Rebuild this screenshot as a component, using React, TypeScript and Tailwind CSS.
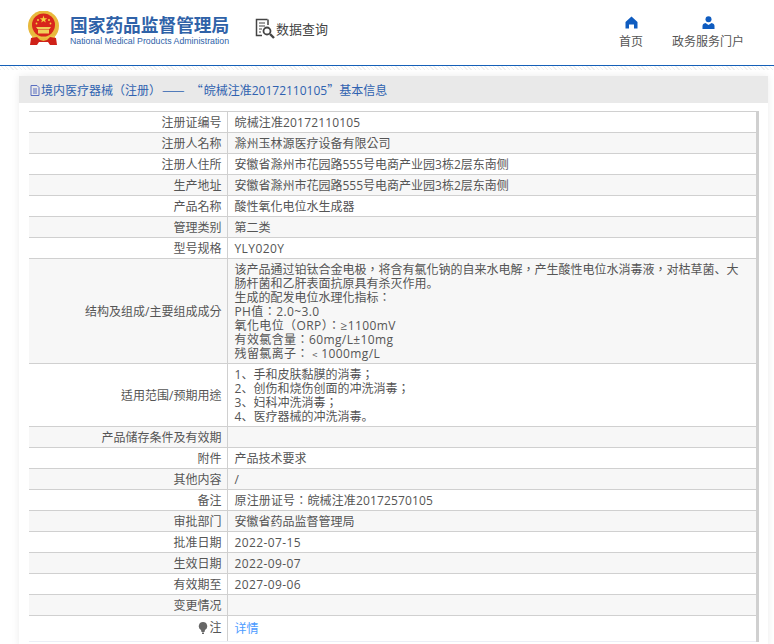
import React from "react";

// 、。 sit low-left in the reference, the rest of the punctuation is centred
function Txt({ children }: { children: string }) {
  return (
    <>
      {children.split(/([、。])/).map((part, i) =>
        part === "、" || part === "。" ? (
          <span key={i} className="font-['Noto_Sans_CJK_SC',sans-serif] leading-[0]">
            {part}
          </span>
        ) : (
          part
        ),
      )}
    </>
  );
}

const Wide = ({ children }: { children: React.ReactNode }) => <span className="tracking-[0.4px]">{children}</span>;

const rows: { label: React.ReactNode; value?: React.ReactNode; alt?: boolean }[] = [
  { label: "注册证编号", value: <span className="tracking-[0.15px]">皖械注准20172110105</span> },
  { label: "注册人名称", value: "滁州玉林源医疗设备有限公司", alt: true },
  { label: "注册人住所", value: "安徽省滁州市花园路555号电商产业园3栋2层东南侧" },
  { label: "生产地址", value: "安徽省滁州市花园路555号电商产业园3栋2层东南侧", alt: true },
  { label: "产品名称", value: "酸性氧化电位水生成器" },
  { label: "管理类别", value: "第二类", alt: true },
  { label: "型号规格", value: <Wide>YLY020Y</Wide> },
  {
    label: "结构及组成/主要组成成分",
    alt: true,
    value: (
      <>
        <Txt>该产品通过铂钛合金电极，将含有氯化钠的自来水电解，产生酸性电位水消毒液，对枯草菌、大肠杆菌和乙肝表面抗原具有杀灭作用。</Txt>
        <br />
        生成的配发电位水理化指标：
        <br />
        <Wide>PH值：2.0~3.0</Wide>
        <br />
        <Wide>氧化电位（ORP）：≥1100mV</Wide>
        <br />
        <Wide>有效氯含量：60mg/L±10mg</Wide>
        <br />
        <Wide>残留氯离子：﹤1000mg/L</Wide>
      </>
    ),
  },
  {
    label: "适用范围/预期用途",
    value: (
      <>
        <Txt>1、手和皮肤黏膜的消毒；</Txt>
        <br />
        <Txt>2、创伤和烧伤创面的冲洗消毒；</Txt>
        <br />
        <Txt>3、妇科冲洗消毒；</Txt>
        <br />
        <Txt>4、医疗器械的冲洗消毒。</Txt>
      </>
    ),
  },
  { label: "产品储存条件及有效期", alt: true },
  { label: "附件", value: "产品技术要求" },
  { label: "其他内容", value: "/", alt: true },
  { label: "备注", value: <span className="tracking-[0.15px]">原注册证号：皖械注准20172570105</span> },
  { label: "审批部门", value: "安徽省药品监督管理局", alt: true },
  { label: "批准日期", value: <Wide>2022-07-15</Wide> },
  { label: "生效日期", value: <Wide>2022-09-07</Wide>, alt: true },
  { label: "有效期至", value: <Wide>2027-09-06</Wide> },
  { label: "变更情况", alt: true },
];

function Emblem() {
  return (
    <svg width="33" height="36" viewBox="0 0 33 36" className="shrink-0">
      <circle cx="16.5" cy="15" r="15.5" fill="#e8b93c" />
      <circle cx="16.5" cy="14" r="11.5" fill="#d8261c" />
      <polygon points="16.5,4.5 17.4,7.2 20.2,7.2 18,8.9 18.8,11.6 16.5,10 14.2,11.6 15,8.9 12.8,7.2 15.6,7.2" fill="#f4d03f" />
      <circle cx="11" cy="9" r="1" fill="#f4d03f" />
      <circle cx="22" cy="9" r="1" fill="#f4d03f" />
      <circle cx="9.5" cy="12.5" r="0.9" fill="#f4d03f" />
      <circle cx="23.5" cy="12.5" r="0.9" fill="#f4d03f" />
      <path d="M9 16h15l-1.5 2h-12z M11 18.5h11v4H11z" fill="#f0cf5a" />
      <path d="M5 24q11.500 5 23 0v3H5z" fill="#efc34a" />
      <path d="M4 27l6-1 3 3 3.500 1 3.500-1 3-3 6 1 1 7h-7l-2-3h-9l-2 3H3z" fill="#cf2118" />
    </svg>
  );
}

function SearchDoc() {
  return (
    <svg width="21" height="21" viewBox="0 0 21 21" fill="none" stroke="#444" className="shrink-0">
      <path d="M12.500 1.500H1.500v16H7" strokeWidth="1.500" />
      <path d="M13 1.500V7" strokeWidth="1.500" />
      <path d="M4 5h6M4 8h6M4 11h3M4 14h2" strokeWidth="1.200" />
      <circle cx="12" cy="13" r="3.500" strokeWidth="1.800" />
      <path d="M15 16l4 4" strokeWidth="2.400" />
    </svg>
  );
}

function NavHome() {
  return (
    <svg width="13" height="13" viewBox="0 0 13 13" fill="#0f5cc0">
      <path d="M6.500.5L12.500 6v6.500H9V8.500H4v4H.5V6z" />
    </svg>
  );
}

function NavUser() {
  return (
    <svg width="13" height="13" viewBox="0 0 13 13" fill="#0f5cc0">
      <circle cx="6.500" cy="3.200" r="3" />
      <path d="M0.500 13V10q0-2.500 3-3l3 2 3-2q3 .5 3 3v3z" />
    </svg>
  );
}

export default function App() {
  return (
    <div className="h-[644px] w-[774px] overflow-hidden bg-white font-['Open_Sans','Noto_Sans_CJK_TC',sans-serif] text-[12px] leading-[14px] text-[#555]">
      <header className="flex h-[66px] items-start border-b border-[#1560b8] pl-[27px]">
        <div className="mt-[11px]">
          <Emblem />
        </div>
        <div className="ml-[10px] mt-[14px] w-[170px]">
          <div className="font-['Noto_Sans_CJK_SC',sans-serif] text-[17.700px] font-bold leading-[20px] text-[#2f62a8]">国家药品监督管理局</div>
          <div className="mt-[2px] whitespace-nowrap font-['Liberation_Sans',sans-serif] text-[8.750px] leading-[11px] text-[#2f62a8]">
            National Medical Products Administration
          </div>
        </div>
        <div className="ml-[15px] mt-[18px] flex items-center gap-0">
          <SearchDoc />
          <span className="text-[13px] leading-[20px] text-[#444]">数据查询</span>
        </div>
        <nav className="ml-auto mr-[30px] mt-[16px] flex gap-[29px] text-center">
          <div className="flex w-[24px] flex-col items-center gap-[6px]">
            <NavHome />
            <span className="whitespace-nowrap">首页</span>
          </div>
          <div className="flex w-[72px] flex-col items-center gap-[6px]">
            <NavUser />
            <span className="whitespace-nowrap">政务服务门户</span>
          </div>
        </nav>
      </header>
      <div className="h-[4px] bg-[repeating-linear-gradient(45deg,#f0f0f0_0,#f0f0f0_1px,#fff_1px,#fff_3px)]" />

      <main className="ml-[19px] mt-[6px] w-[749px] bg-white shadow-[0_0_8px_rgba(0,0,0,0.08)]">
        <div className="flex h-[27px] items-center whitespace-pre bg-[#e9e9e9] pl-[11px] pt-[2px] text-[#2f62b0]">
          <svg width="10" height="11" viewBox="0 0 10 11" fill="none" stroke="#5a6fc0" className="mr-[1px] shrink-0">
            <path d="M1 .5h6l2 2v8H1zM3 4h4M3 6h4M3 8h4" />
          </svg>
          <span>
            境内医疗器械（注册）
            <span className="ml-[-2px] font-['Noto_Sans_CJK_SC',sans-serif] text-[13.500px] leading-[0]"> ——</span>
            <span className="ml-[6px] mr-[1px] font-['Noto_Sans_CJK_TC',sans-serif] leading-[0]">“</span>
            皖械注准20172110105
            <span className="font-['Noto_Sans_CJK_TC',sans-serif] leading-[0]">”</span>
            基本信息
          </span>
        </div>
        <div className="px-[10px] pb-[6px] pt-[8px]">
          <table className="w-[730px] table-fixed border-collapse border-r-[3px] border-r-[#d0d0d0]">
            <colgroup>
              <col className="w-[198px]" />
              <col />
            </colgroup>
            <tbody>
              {rows.map((row, i) => (
                <tr key={i} className={row.alt ? "bg-[#f7f7f7]" : "bg-white"}>
                  <td className="border border-l-0 border-[#d0d0d0] pb-[2px] pl-[6px] pr-[5px] pt-[4px] text-right align-middle">{row.label}</td>
                  <td className="border border-r-0 border-[#d0d0d0] pb-[2px] pl-[7px] pr-[11px] pt-[4px] align-top">{row.value}</td>
                </tr>
              ))}
              <tr>
                <td className="border-b border-r border-b-[#eceef6] border-r-[#d0d0d0] pb-[4px] pl-[6px] pr-[5px] pt-[5px] text-right">
                  <span className="inline-flex items-center gap-[1px]">
                    <svg width="10" height="12" viewBox="0 0 10 12" fill="#666">
                      <path d="M5 0a4.200 4.200 0 0 1 2 7.900L6.500 10h-3L3 7.900A4.200 4.200 0 0 1 5 0zM4 10.500h2V12H4z" />
                    </svg>
                    注
                  </span>
                </td>
                <td className="border-b border-l border-b-[#eceef6] border-l-[#d0d0d0] pb-[4px] pl-[7px] pr-[6px] pt-[5px] text-[#4c9bff]">详情</td>
              </tr>
            </tbody>
          </table>
        </div>
      </main>
    </div>
  );
}
